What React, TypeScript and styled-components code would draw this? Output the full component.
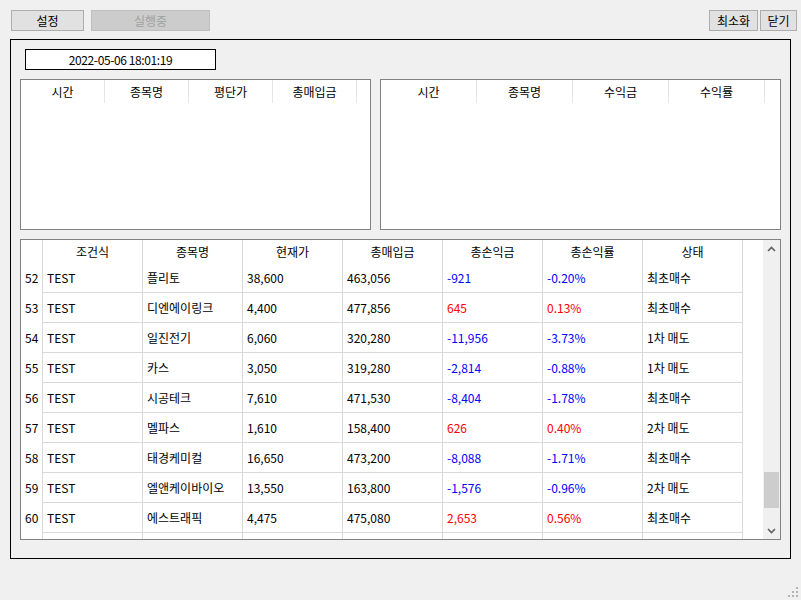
import React from "react";
import styled, { createGlobalStyle } from "styled-components";

const GlobalStyle = createGlobalStyle`
  html, body {
    margin: 0;
    padding: 0;
    background: #f0f0f0;
  }
  body {
    font-family: "Noto Sans CJK KR", "Noto Sans", sans-serif;
    font-size: 12px;
    color: #000;
  }
  * { box-sizing: border-box; }
`;

const Window = styled.div`
  position: relative;
  width: 801px;
  height: 600px;
  background: #f0f0f0;
  display: flex;
  flex-direction: column;
`;

const TopBar = styled.div`
  height: 39px;
  display: flex;
  justify-content: space-between;
  align-items: flex-start;
  padding: 10px 4px 0 11px;
`;

const ButtonGroup = styled.div<{ $gap: number }>`
  display: flex;
  gap: ${(p) => p.$gap}px;
`;

const Button = styled.div<{ $w: number; $disabled?: boolean }>`
  width: ${(p) => p.$w}px;
  height: 21px;
  display: flex;
  align-items: center;
  justify-content: center;
  background: ${(p) => (p.$disabled ? "#cccccc" : "#e1e1e1")};
  border: 1px solid ${(p) => (p.$disabled ? "#bfbfbf" : "#adadad")};
  color: ${(p) => (p.$disabled ? "#a0a0a0" : "#000")};
  font-size: 12px;
  line-height: 1;
`;

const Frame = styled.div`
  margin-left: 10px;
  width: 781px;
  height: 520px;
  border: 1px solid #000;
  padding: 9px 9px 0 9px;
  display: flex;
  flex-direction: column;
`;

const DateBox = styled.div`
  margin-left: 5px;
  width: 191px;
  height: 21px;
  border: 1px solid #000;
  background: #fff;
  display: flex;
  align-items: center;
  justify-content: center;
  font-size: 12px;
  letter-spacing: -0.4px;
`;

const ListsRow = styled.div`
  margin-top: 9px;
  display: flex;
  gap: 9px;
  height: 151px;
`;

const ListBox = styled.div<{ $w: number }>`
  width: ${(p) => p.$w}px;
  height: 100%;
  background: #fff;
  border: 1px solid #828282;
`;

const ListHeader = styled.div<{ $col: number; $n: number }>`
  display: grid;
  grid-template-columns: repeat(${(p) => p.$n}, ${(p) => p.$col}px);
  height: 23px;
`;

const ListHeaderCell = styled.div`
  border-right: 1px solid #e5e5e5;
  display: flex;
  align-items: center;
  justify-content: center;
  font-size: 12px;
  padding-bottom: 1px;
`;

const GridBox = styled.div`
  margin-top: 9px;
  height: 301px;
  border: 1px solid #828282;
  background: #fff;
  display: flex;
`;

const GridViewport = styled.div`
  flex: 1;
  overflow: hidden;
  display: flex;
  flex-direction: column;
`;

const GridRow = styled.div<{ $h: number }>`
  display: grid;
  grid-template-columns: 22px repeat(7, 100px);
  height: ${(p) => p.$h}px;
  flex: none;
`;

const RowNum = styled.div`
  border-right: 1px solid #d9d9d9;
  display: flex;
  align-items: center;
  padding-left: 4px;
  padding-bottom: 1px;
`;

const HeadCell = styled.div`
  border-right: 1px solid #d9d9d9;
  display: flex;
  align-items: center;
  justify-content: center;
  padding-bottom: 1px;
`;

const Cell = styled.div<{ $tone?: "neg" | "pos" }>`
  border-right: 1px solid #d9d9d9;
  border-bottom: 1px solid #d9d9d9;
  display: flex;
  align-items: center;
  padding-left: 4px;
  white-space: nowrap;
  color: ${(p) => (p.$tone === "neg" ? "#0000ff" : p.$tone === "pos" ? "#ff0000" : "#000")};
`;

const ScrollBar = styled.div`
  width: 17px;
  background: #f0f0f0;
  display: flex;
  flex-direction: column;
`;

const ScrollArrow = styled.div`
  width: 17px;
  height: 17px;
  display: flex;
  align-items: center;
  justify-content: center;
`;

const Track = styled.div`
  flex: 1;
  display: flex;
  flex-direction: column;
  align-items: center;
`;

const Thumb = styled.div<{ $top: number; $h: number }>`
  margin-top: ${(p) => p.$top}px;
  width: 15px;
  height: ${(p) => p.$h}px;
  background: #cdcdcd;
`;

const Grip = styled.svg`
  position: absolute;
  right: 3px;
  bottom: 3px;
`;

type Row = {
  n: number;
  cond: string;
  name: string;
  price: string;
  buy: string;
  pl: string;
  rate: string;
  state: string;
};

const rows: Row[] = [
  { n: 52, cond: "TEST", name: "플리토", price: "38,600", buy: "463,056", pl: "-921", rate: "-0.20%", state: "최초매수" },
  { n: 53, cond: "TEST", name: "디엔에이링크", price: "4,400", buy: "477,856", pl: "645", rate: "0.13%", state: "최초매수" },
  { n: 54, cond: "TEST", name: "일진전기", price: "6,060", buy: "320,280", pl: "-11,956", rate: "-3.73%", state: "1차 매도" },
  { n: 55, cond: "TEST", name: "카스", price: "3,050", buy: "319,280", pl: "-2,814", rate: "-0.88%", state: "1차 매도" },
  { n: 56, cond: "TEST", name: "시공테크", price: "7,610", buy: "471,530", pl: "-8,404", rate: "-1.78%", state: "최초매수" },
  { n: 57, cond: "TEST", name: "멜파스", price: "1,610", buy: "158,400", pl: "626", rate: "0.40%", state: "2차 매도" },
  { n: 58, cond: "TEST", name: "태경케미컬", price: "16,650", buy: "473,200", pl: "-8,088", rate: "-1.71%", state: "최초매수" },
  { n: 59, cond: "TEST", name: "엘앤케이바이오", price: "13,550", buy: "163,800", pl: "-1,576", rate: "-0.96%", state: "2차 매도" },
  { n: 60, cond: "TEST", name: "에스트래픽", price: "4,475", buy: "475,080", pl: "2,653", rate: "0.56%", state: "최초매수" },
  { n: 61, cond: "", name: "", price: "", buy: "", pl: "", rate: "", state: "" },
];

const tone = (v: string): "neg" | "pos" | undefined =>
  v === "" ? undefined : v.startsWith("-") ? "neg" : "pos";

const gridHeads = ["조건식", "종목명", "현재가", "총매입금", "총손익금", "총손익률", "상태"];

const Chevron = ({ up }: { up?: boolean }) => (
  <svg width="9" height="6" viewBox="0 0 9 6">
    <path
      d={up ? "M1 5 L4.5 1.5 L8 5" : "M1 1 L4.5 4.5 L8 1"}
      fill="none"
      stroke="#606060"
      strokeWidth="1.6"
    />
  </svg>
);

export default function App() {
  return (
    <Window>
      <GlobalStyle />
      <TopBar>
        <ButtonGroup $gap={7}>
          <Button $w={73}>설정</Button>
          <Button $w={119} $disabled>
            실행중
          </Button>
        </ButtonGroup>
        <ButtonGroup $gap={2}>
          <Button $w={49}>최소화</Button>
          <Button $w={37}>닫기</Button>
        </ButtonGroup>
      </TopBar>
      <Frame>
        <DateBox>2022-05-06 18:01:19</DateBox>
        <ListsRow>
          <ListBox $w={351}>
            <ListHeader $col={84} $n={4}>
              {["시간", "종목명", "평단가", "총매입금"].map((h) => (
                <ListHeaderCell key={h}>{h}</ListHeaderCell>
              ))}
            </ListHeader>
          </ListBox>
          <ListBox $w={401}>
            <ListHeader $col={96} $n={4}>
              {["시간", "종목명", "수익금", "수익률"].map((h) => (
                <ListHeaderCell key={h}>{h}</ListHeaderCell>
              ))}
            </ListHeader>
          </ListBox>
        </ListsRow>
        <GridBox>
          <GridViewport>
            <GridRow $h={23}>
              <RowNum />
              {gridHeads.map((h) => (
                <HeadCell key={h}>{h}</HeadCell>
              ))}
            </GridRow>
            {rows.map((r) => (
              <GridRow $h={30} key={r.n}>
                <RowNum>{r.cond ? r.n : ""}</RowNum>
                <Cell>{r.cond}</Cell>
                <Cell>{r.name}</Cell>
                <Cell>{r.price}</Cell>
                <Cell>{r.buy}</Cell>
                <Cell $tone={tone(r.pl)}>{r.pl}</Cell>
                <Cell $tone={tone(r.rate)}>{r.rate}</Cell>
                <Cell>{r.state}</Cell>
              </GridRow>
            ))}
          </GridViewport>
          <ScrollBar>
            <ScrollArrow>
              <Chevron up />
            </ScrollArrow>
            <Track>
              <Thumb $top={215} $h={36} />
            </Track>
            <ScrollArrow>
              <Chevron />
            </ScrollArrow>
          </ScrollBar>
        </GridBox>
      </Frame>
      <Grip width="10" height="10" viewBox="0 0 10 10">
        {[
          [8, 0],
          [8, 4],
          [4, 4],
          [8, 8],
          [4, 8],
          [0, 8],
        ].map(([x, y]) => (
          <rect key={`${x}-${y}`} x={x} y={y} width="2" height="2" fill="#b4b4b4" />
        ))}
      </Grip>
    </Window>
  );
}
